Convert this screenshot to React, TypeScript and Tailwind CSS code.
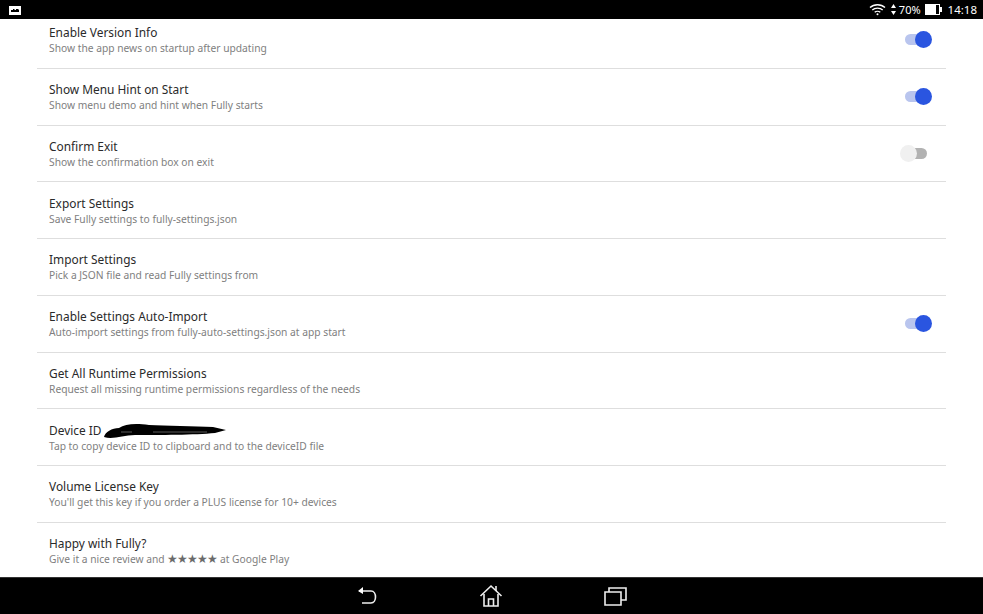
import React from 'react'

type RowProps = {
  title: React.ReactNode
  sub: React.ReactNode
  toggle?: 'on' | 'off'
}

const Toggle: React.FC<{ on: boolean }> = ({ on }) => {
  if (on) {
    return (
      <div className="relative w-[27px] h-[17px] blur-[0.4px]">
        <div className="absolute left-0 top-[3px] w-[24px] h-[11px] rounded-full bg-[#b9c5ee]" />
        <div className="absolute right-0 top-0 w-[17px] h-[17px] rounded-full bg-[#2a55e0]" />
      </div>
    )
  }
  return (
    <div className="relative w-[27px] h-[17px] -translate-x-[5px] blur-[0.4px]">
      <div className="absolute right-0 top-[3px] w-[22px] h-[11px] rounded-full bg-[#b2b2b2]" />
      <div className="absolute left-0 top-0 w-[17px] h-[17px] rounded-full bg-[#f0f0f0]" />
    </div>
  )
}

const Row: React.FC<RowProps> = ({ title, sub, toggle }) => {
  return (
    <div className="h-[56.75px] shrink-0 border-b border-[#dedede] flex items-center pl-[12px] pr-[14px]">
      <div className="flex-1 min-w-0 mt-[1px]">
        <div className="text-[11.9px] leading-[17px] text-[#2a2a2a]">{title}</div>
        <div className="text-[10.25px] leading-[15px] text-[#808080]">{sub}</div>
      </div>
      {toggle && <Toggle on={toggle === 'on'} />}
    </div>
  )
}

const StatusBar = () => (
  <div className="h-[19px] shrink-0 bg-black flex items-center justify-between pl-[9px] pr-[6px] text-white">
    <svg width="12" height="10" viewBox="0 0 12 10">
      <path d="M0 1h12v9H0z" fill="#fff" />
      <path d="M2 7V5h2V4h1.500v1H7V4h2.500v1H10v2z" fill="#000" />
    </svg>
    <div className="flex items-center text-[11px] leading-none">
      <svg width="17" height="13" viewBox="0 0 17 13" fill="none" stroke="#fff" strokeWidth="1.400">
        <path d="M1 4.600C5 .8 12 .8 16 4.600" />
        <path d="M3.300 7C6 4.500 11 4.500 13.700 7" />
        <path d="M5.700 9.300C7.200 8 9.800 8 11.300 9.300" />
        <circle cx="8.500" cy="11.300" r="1" fill="#fff" stroke="none" />
      </svg>
      <svg width="5" height="11" viewBox="0 0 5 11" className="ml-[5px]">
        <path d="M2.500 0L5 4H0zM2.500 11L0 7h5z" fill="#fff" />
      </svg>
      <span className="ml-[3px]">70%</span>
      <svg width="17" height="11" viewBox="0 0 17 11" className="ml-[4px]">
        <path d="M0 0h15v11H0z" fill="#fff" />
        <path d="M11 1h3v9h-3z" fill="#000" />
        <path d="M15 3h2v5h-2z" fill="#fff" />
      </svg>
      <span className="ml-[6px] text-[11.5px]">14:18</span>
    </div>
  </div>
)

const NavBar = () => (
  <div className="h-[37px] shrink-0 bg-black border-t border-[#333] flex items-center justify-center text-white">
    <svg width="22" height="20" viewBox="0 0 22 20" fill="none" stroke="#eee" strokeWidth="1.600">
      <path d="M3 5h12c6 0 6 12 0 12H6" />
      <path d="M7 1L2 5l5 3z" fill="#fff" stroke="none" />
    </svg>
    <svg width="24" height="24" viewBox="0 0 24 24" fill="none" stroke="#eee" strokeWidth="1.600" className="ml-[101px]">
      <path d="M1.500 12L12 2l10.500 10" />
      <path d="M5 10v12h14V10" />
      <path d="M17 7V2" />
      <path d="M9.500 22v-7h5v7" />
    </svg>
    <svg width="23" height="20" viewBox="0 0 23 20" fill="none" stroke="#eee" strokeWidth="1.600" className="ml-[101px]">
      <path d="M1 6h16v13H1z" />
      <path d="M5 6V2h17v12h-5" />
    </svg>
  </div>
)

// hand scribble over the redacted device id
const Scribble = () => (
  <svg width="124" height="16" viewBox="0 0 124 16" className="absolute left-[54px] top-[1px]">
    <path d="M1 14C2 9 9 5 16 5 22 1 32 0 46 2 62 3 92 3 110 4L123 7 112 10C92 12 56 12 32 12 20 12 10 17 1 14z" fill="#000" />
    <path d="M18 9h11M50 9h54" stroke="#fff" strokeWidth="0.600" opacity="0.6" />
  </svg>
)

export default function App() {
  return (
    <div
      className="w-[983px] h-[614px] flex flex-col bg-white overflow-hidden"
      style={{ fontFamily: '"Noto Sans", "Liberation Sans", sans-serif' }}
    >
      <StatusBar />
      <div className="flex-1 min-h-0 overflow-hidden px-[37px]">
        <div className="-mt-[7px]">
          <Row title="Enable Version Info" sub="Show the app news on startup after updating" toggle="on" />
          <Row title="Show Menu Hint on Start" sub="Show menu demo and hint when Fully starts" toggle="on" />
          <Row title="Confirm Exit" sub="Show the confirmation box on exit" toggle="off" />
          <Row title="Export Settings" sub="Save Fully settings to fully-settings.json" />
          <Row title="Import Settings" sub="Pick a JSON file and read Fully settings from" />
          <Row title="Enable Settings Auto-Import" sub="Auto-import settings from fully-auto-settings.json at app start" toggle="on" />
          <Row title="Get All Runtime Permissions" sub="Request all missing runtime permissions regardless of the needs" />
          <Row
            title={
              <span className="relative inline-block">
                Device ID
                <Scribble />
              </span>
            }
            sub="Tap to copy device ID to clipboard and to the deviceID file"
          />
          <Row title="Volume License Key" sub="You'll get this key if you order a PLUS license for 10+ devices" />
          <Row
            title="Happy with Fully?"
            sub={
              <>
                Give it a nice review and <span className="text-[12px] leading-[12px] tracking-[-1px] text-[#6a6a6a]">★★★★★</span> at Google Play
              </>
            }
          />
        </div>
      </div>
      <NavBar />
    </div>
  )
}
